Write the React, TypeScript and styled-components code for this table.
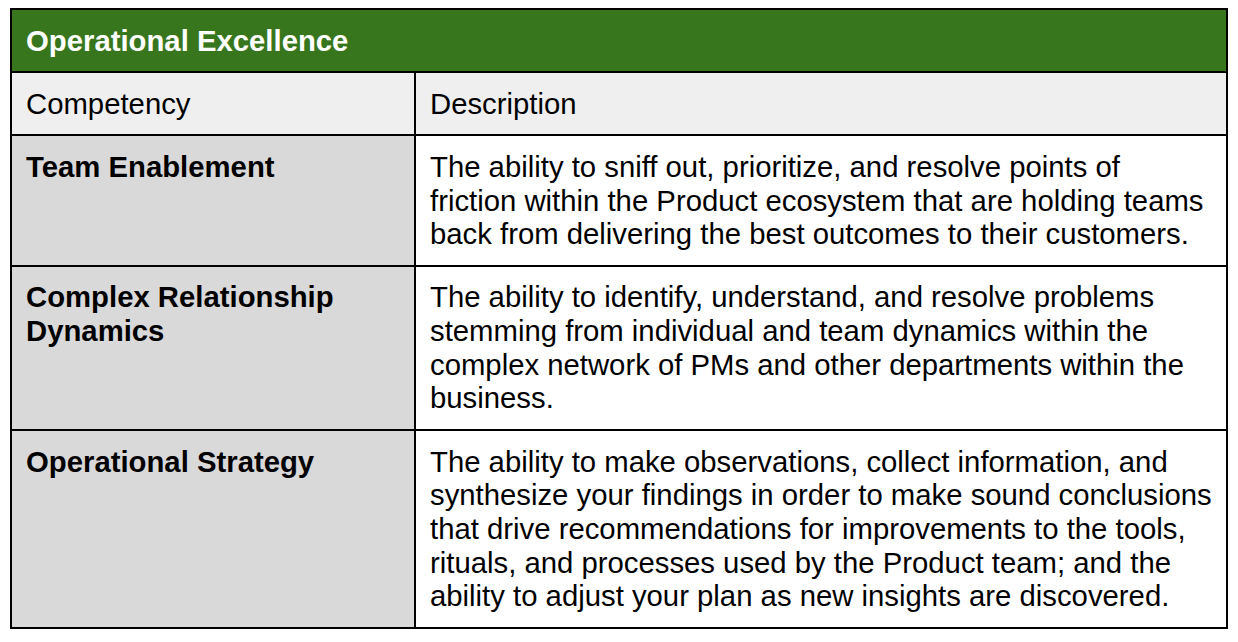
import React from 'react';
import styled, { createGlobalStyle } from 'styled-components';

const GlobalStyle = createGlobalStyle`
  html, body {
    margin: 0;
    padding: 0;
    background: #ffffff;
  }
  body {
    font-family: 'Liberation Sans', Arial, sans-serif;
    color: #000000;
  }
`;

const Page = styled.div`
  width: 1238px;
  height: 642px;
  padding: 8px 0 0 10px;
  box-sizing: border-box;
`;

const Table = styled.table`
  width: 1218px;
  border-collapse: collapse;
  table-layout: fixed;
  border: 2px solid #000;
`;

const Cell = styled.td<{ $bg?: string; $bold?: boolean }>`
  border: 2px solid #000;
  padding: 13.7px 14px;
  vertical-align: top;
  font-size: 29.3px;
  line-height: 33.7px;
  font-weight: ${({ $bold }) => ($bold ? 700 : 400)};
  background: ${({ $bg }) => $bg || '#ffffff'};
`;

const TitleCell = styled.td`
  border: 2px solid #000;
  padding: 13.7px 14px;
  background: #38761d;
  color: #ffffff;
  font-size: 29.3px;
  line-height: 33.7px;
  font-weight: 700;
`;

const rows = [
  {
    name: 'Team Enablement',
    desc: 'The ability to sniff out, prioritize, and resolve points of friction within the Product ecosystem that are holding teams back from delivering the best outcomes to their customers.',
  },
  {
    name: 'Complex Relationship Dynamics',
    desc: 'The ability to identify, understand, and resolve problems stemming from individual and team dynamics within the complex network of PMs and other departments within the business.',
  },
  {
    name: 'Operational Strategy',
    desc: 'The ability to make observations, collect information, and synthesize your findings in order to make sound conclusions that drive recommendations for improvements to the tools, rituals, and processes used by the Product team; and the ability to adjust your plan as new insights are discovered.',
  },
];

const App: React.FC = () => {
  return (
    <Page>
      <GlobalStyle />
      <Table>
        <colgroup>
          <col style={{ width: 404 }} />
          <col />
        </colgroup>
        <tbody>
          <tr>
            <TitleCell colSpan={2}>Operational Excellence</TitleCell>
          </tr>
          <tr>
            <Cell $bg='#efefef'>Competency</Cell>
            <Cell $bg='#efefef'>Description</Cell>
          </tr>
          {rows.map((item, index) => (
            <tr key={`${item.name}${index}`}>
              <Cell $bg='#d9d9d9' $bold>
                {item.name}
              </Cell>
              <Cell>{item.desc}</Cell>
            </tr>
          ))}
        </tbody>
      </Table>
    </Page>
  );
};

export default App;
